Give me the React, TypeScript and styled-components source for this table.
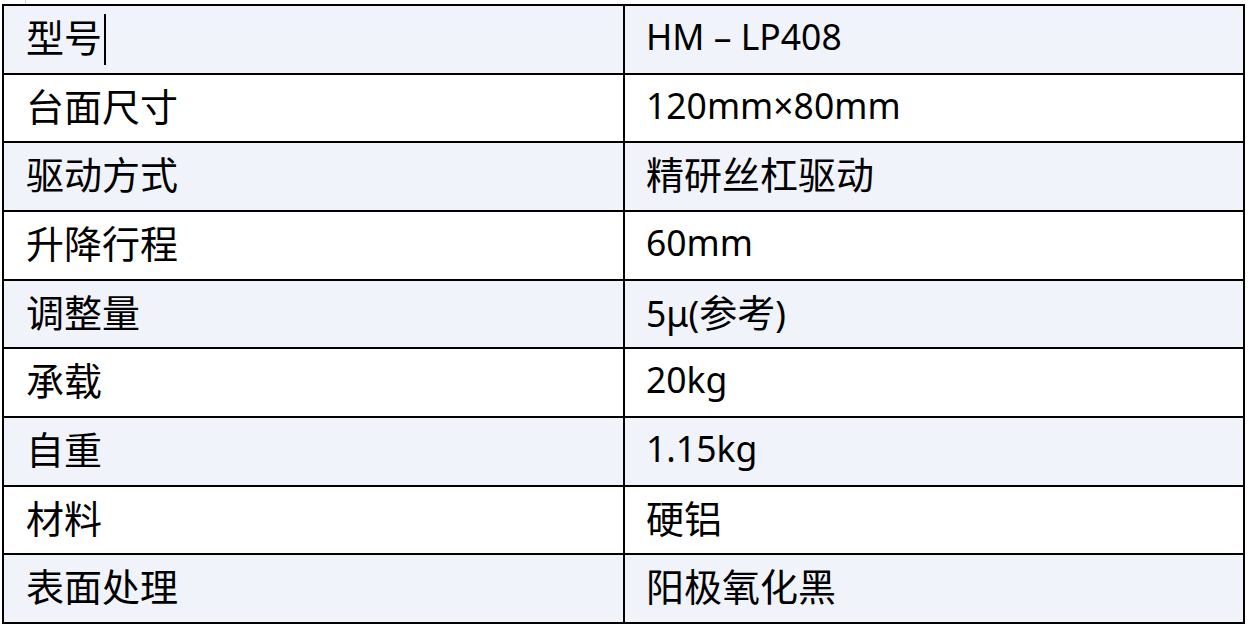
import React from 'react'
import styled, { createGlobalStyle } from 'styled-components'

const GlobalStyle = createGlobalStyle`
  body {
    margin: 0;
    background: #ffffff;
    font-family: "Noto Sans", "Noto Sans CJK SC", sans-serif;
  }
`

const rows: [string, string][] = [
  ['型号', 'HM – LP408'],
  ['台面尺寸', '120mm×80mm'],
  ['驱动方式', '精研丝杠驱动'],
  ['升降行程', '60mm'],
  ['调整量', '5μ(参考)'],
  ['承载', '20kg'],
  ['自重', '1.15kg'],
  ['材料', '硬铝'],
  ['表面处理', '阳极氧化黑'],
]

const Page = styled.div`
  padding-left: 2px;
`

const EdgeMark = styled.div`
  width: 1px;
  height: 4px;
  margin-left: 23px;
  background: #d4d4d4;
`

const Table = styled.div`
  width: 1243px;
  box-sizing: border-box;
  border: 2px solid #000;
`

const Row = styled.div<{ $shaded: boolean }>`
  display: grid;
  grid-template-columns: 621px 1fr;
  height: 66.67px;
  background: ${p => (p.$shaded ? '#f0f3f9' : '#ffffff')};
  & + & {
    border-top: 2px solid #000;
  }
`

const Cell = styled.div<{ $first?: boolean }>`
  display: flex;
  align-items: center;
  box-sizing: border-box;
  padding: 0 0 6px ${p => (p.$first ? '22px' : '21px')};
  border-right: ${p => (p.$first ? '2px solid #000' : 'none')};
  font-size: 35.5px;
  line-height: 1.2;
  color: #000;
  white-space: nowrap;
`

const Han = styled.span`
  font-family: "Noto Sans CJK SC", sans-serif;
  font-size: 38px;
`

const Caret = styled.span`
  display: inline-block;
  width: 2px;
  height: 51px;
  margin: 0 0 -6px 2px;
  background: #000;
`

// split into runs of Chinese characters and everything else
const Text = ({ text }: { text: string }) => {
  const parts = text.match(/[\u3400-\u9fff]+|[^\u3400-\u9fff]+/g) || []
  return (
    <span>
      {parts.map((part, i) =>
        /[\u3400-\u9fff]/.test(part) ? <Han key={i}>{part}</Han> : <React.Fragment key={i}>{part}</React.Fragment>
      )}
    </span>
  )
}

export default function App() {
  return (
    <Page>
      <GlobalStyle />
      <EdgeMark />
      <Table>
        {rows.map(([label, value], i) => (
          <Row key={label} $shaded={i % 2 === 0}>
            <Cell $first>
              <Text text={label} />
              {i === 0 && <Caret />}
            </Cell>
            <Cell>
              <Text text={value} />
            </Cell>
          </Row>
        ))}
      </Table>
    </Page>
  )
}
